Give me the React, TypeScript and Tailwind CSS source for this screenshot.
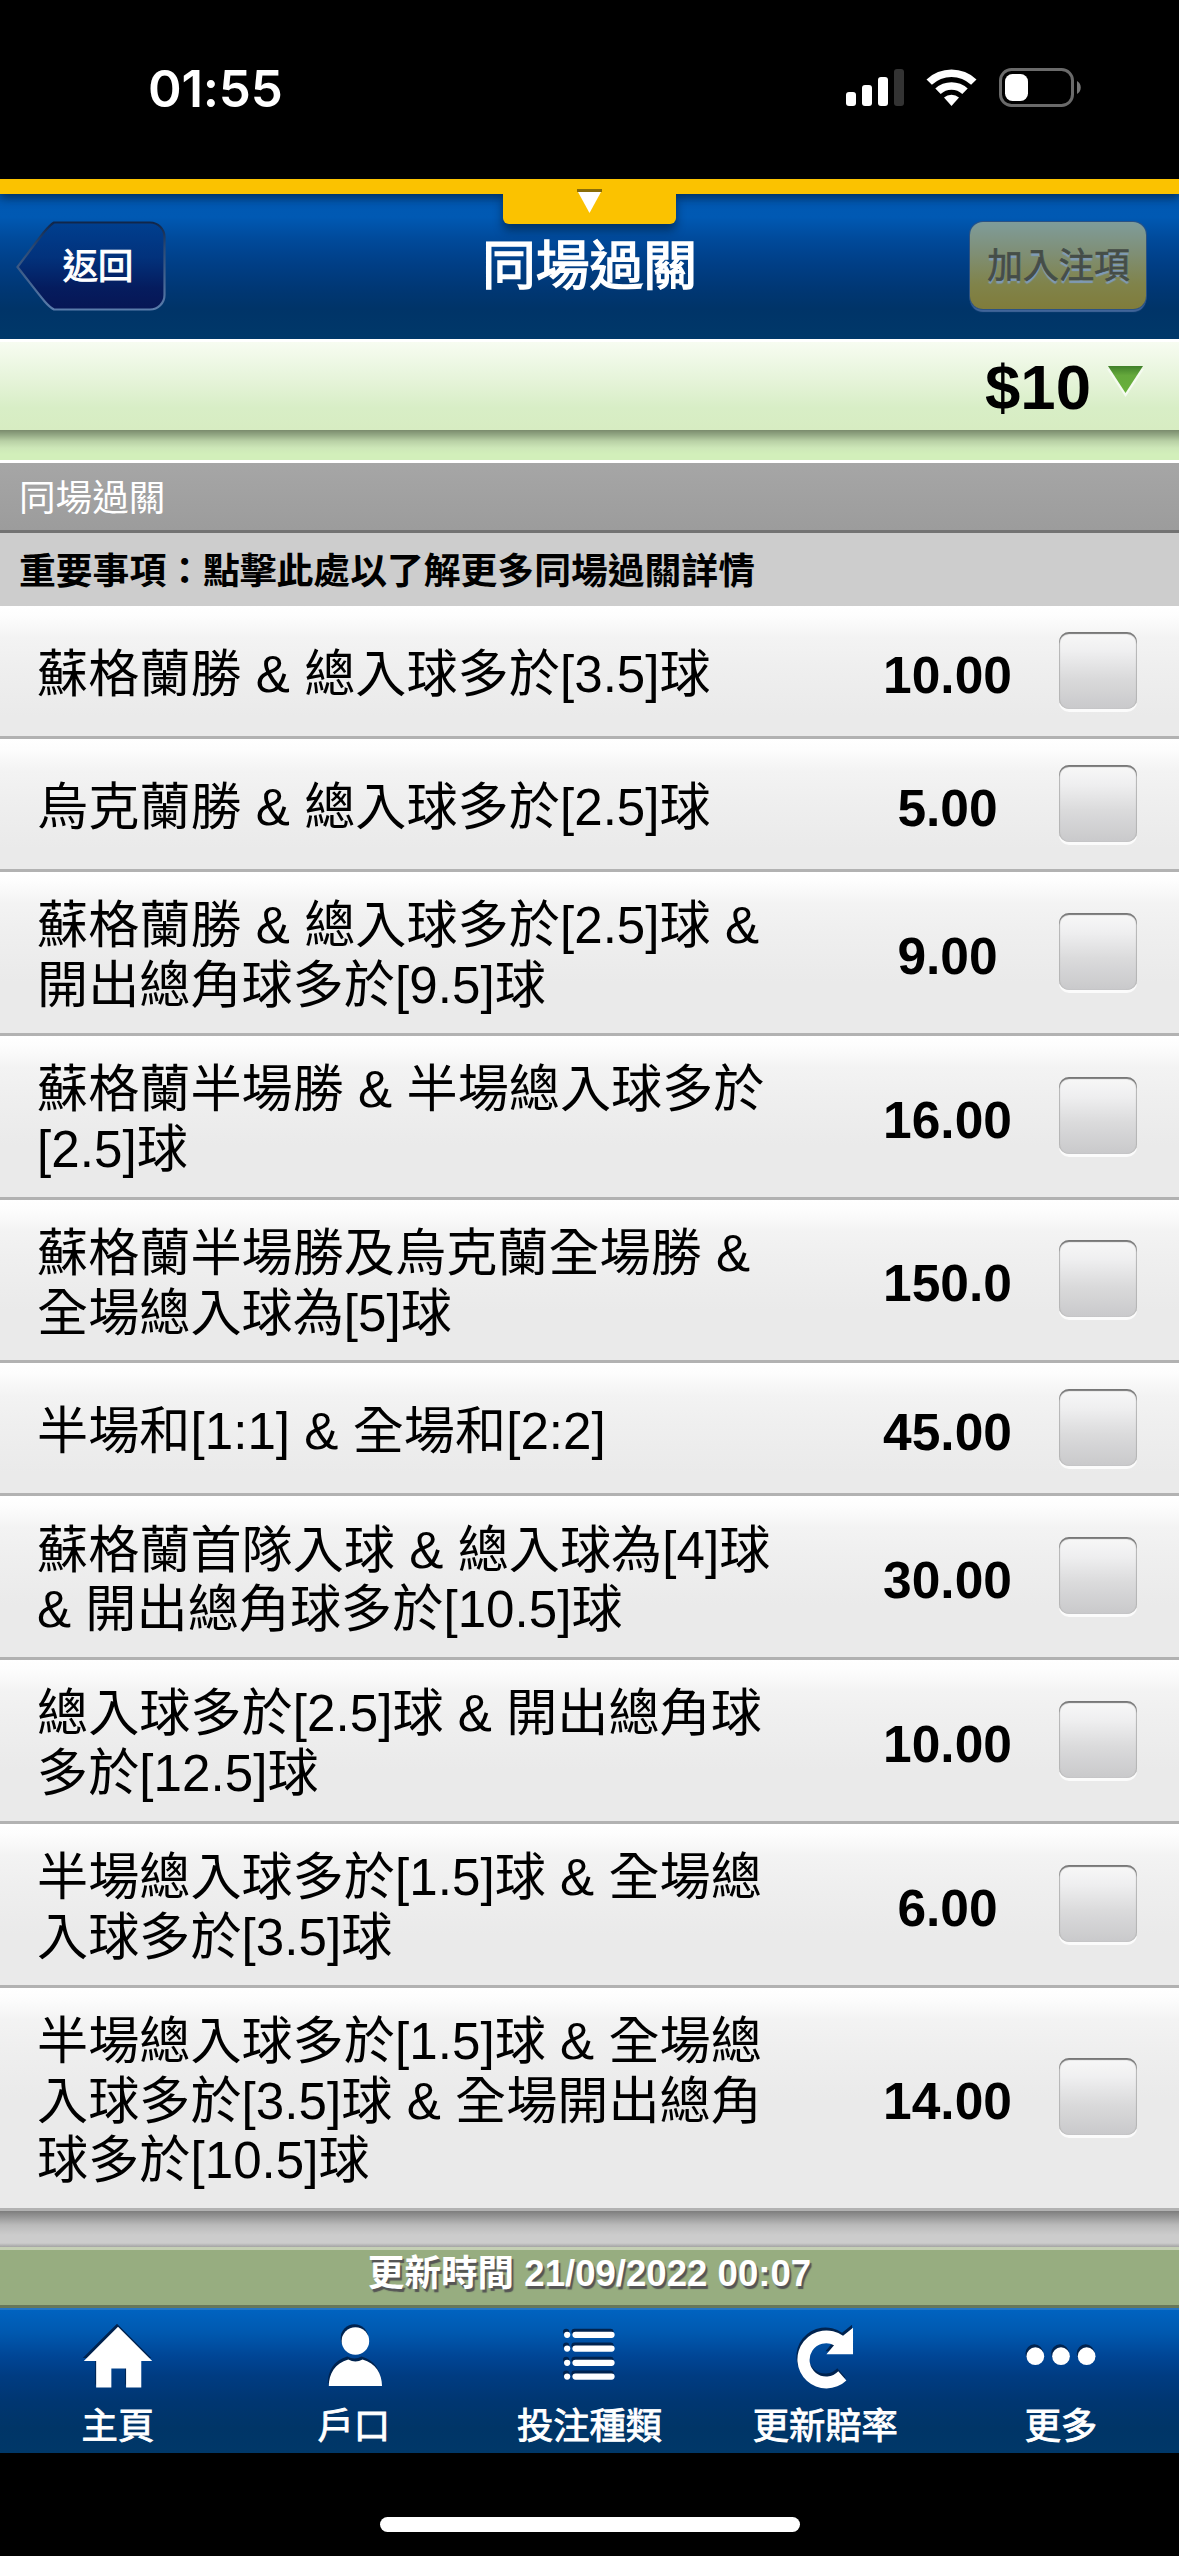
import React from "react";

interface Bet {
  id: number;
  label: string;
  odds: string;
}

interface BetRowProps {
  label: string;
  odds: string;
}

interface TabItemProps {
  label: string;
  children: React.ReactNode;
}

const bets: Bet[] = [
  { id: 1, label: "蘇格蘭勝 & 總入球多於[3.5]球", odds: "10.00" },
  { id: 2, label: "烏克蘭勝 & 總入球多於[2.5]球", odds: "5.00" },
  { id: 3, label: "蘇格蘭勝 & 總入球多於[2.5]球 & 開出總角球多於[9.5]球", odds: "9.00" },
  { id: 4, label: "蘇格蘭半場勝 & 半場總入球多於[2.5]球", odds: "16.00" },
  { id: 5, label: "蘇格蘭半場勝及烏克蘭全場勝 & 全場總入球為[5]球", odds: "150.0" },
  { id: 6, label: "半場和[1:1] & 全場和[2:2]", odds: "45.00" },
  { id: 7, label: "蘇格蘭首隊入球 & 總入球為[4]球 & 開出總角球多於[10.5]球", odds: "30.00" },
  { id: 8, label: "總入球多於[2.5]球 & 開出總角球多於[12.5]球", odds: "10.00" },
  { id: 9, label: "半場總入球多於[1.5]球 & 全場總入球多於[3.5]球", odds: "6.00" },
  { id: 10, label: "半場總入球多於[1.5]球 & 全場總入球多於[3.5]球 & 全場開出總角球多於[10.5]球", odds: "14.00" },
];

const StatusBar: React.FC = () => (
  <div className="flex h-[179px] items-start justify-between bg-black pt-[59px] pl-[148px] pr-[97px] text-white">
    <span className="font-['Inter'] text-[51px] leading-[60px] font-semibold tracking-[-0.2px]">
      01:55
    </span>
    <svg className="mt-[7px] h-[44px] w-[236px]" viewBox="846 66 236 44">
      <rect x="846" y="92" width="10" height="14" rx="3" fill="#fff" />
      <rect x="862" y="85" width="10" height="21" rx="3" fill="#fff" />
      <rect x="878" y="77" width="10" height="29" rx="3" fill="#fff" />
      <rect x="894" y="69" width="10" height="37" rx="3" fill="#333" />
      <path d="M926.5 79.5a36.2 36.2 0 0 1 50 0l-5.4 5.2a28.5 28.5 0 0 0-39.2 0z" fill="#fff" />
      <path d="M935.3 88.6a23.6 23.6 0 0 1 32.4 0l-5.4 5.3a15.9 15.9 0 0 0-21.6 0z" fill="#fff" />
      <path d="M944 97.6a11 11 0 0 1 15 0l-7.5 8.4z" fill="#fff" />
      <rect x="1000.5" y="69.5" width="72" height="36" rx="11" fill="none" stroke="#6a6a6a" strokeWidth="3" />
      <rect x="1005" y="74" width="23" height="27" rx="7.5" fill="#fff" />
      <path d="M1077 81c5 2.6 5 10.4 0 13z" fill="#777" />
    </svg>
  </div>
);

const Header: React.FC = () => (
  <header className="relative flex h-[160px] items-start justify-between bg-[linear-gradient(180deg,#0057b0_0px,#0059b3_38px,#004a9b_60px,#003f87_84px,#003774_110px,#003468_130px,#003869_160px)] pr-[33px] pl-[16px]">
    <div className="absolute inset-x-0 top-0 h-[15px] bg-[#fbc200] shadow-[0_4px_10px_rgba(0,20,40,0.6)]" />
    <div className="absolute top-[14px] left-[503px] h-[31px] w-[173px] rounded-b-[6px] bg-[#fbc200] shadow-[0_6px_10px_rgba(0,20,40,0.55)] [clip-path:inset(1px_-20px_-20px_-20px)]" />
    <svg className="absolute top-[10px] left-[576px] h-[26px] w-[27px]" viewBox="0 0 27 26">
      <path d="M1 0h25v3H1z" fill="#8a6d08" />
      <path d="M2 3h23L13.5 24z" fill="#fff" />
    </svg>

    <button className="relative mt-[42px] flex h-[92px] w-[150px] items-center justify-center pl-[14px]">
      <svg className="absolute inset-0 h-[92px] w-[150px]" viewBox="0 0 150 92">
        <defs>
          <linearGradient id="backFill" x1="0" y1="0" x2="0" y2="1">
            <stop offset="0" stopColor="#003f8f" />
            <stop offset="0.4" stopColor="#02327c" />
            <stop offset="0.75" stopColor="#051c5e" />
            <stop offset="1" stopColor="#071655" />
          </linearGradient>
          <linearGradient id="backEdge" x1="0" y1="0" x2="0" y2="1">
            <stop offset="0" stopColor="#10264a" />
            <stop offset="0.3" stopColor="#2c4a75" />
            <stop offset="1" stopColor="#5a7cab" />
          </linearGradient>
        </defs>
        <path
          d="M38 1.5H134a14.5 14.5 0 0 1 14.5 14.5V74a14.5 14.5 0 0 1-14.5 14.5H38C31 85 25 76 1.5 46C25 15 31 6 38 1.5z"
          fill="url(#backFill)"
          stroke="url(#backEdge)"
          strokeWidth="2.2"
        />
      </svg>
      <span className="relative text-[35.3px] leading-[50px] text-white [-webkit-text-stroke:1px_#fff]">
        返回
      </span>
    </button>

    <h1 className="absolute top-[54px] left-[389px] w-[401px] text-center text-[53.8px] leading-[66px] text-white [-webkit-text-stroke:1.5px_#fff]">
      同場過關
    </h1>

    <button className="mt-[43px] flex h-[87px] w-[176px] items-center justify-center rounded-[13px] bg-[linear-gradient(180deg,#7f9c9a_0%,#7f8f76_35%,#80834a_72%,#807c3b_100%)] shadow-[0_0_0_1px_#2c5283,0_3px_1px_#41659a]">
      <span className="pt-[1px] pl-[1px] text-[35.6px] leading-[50px] text-[#454d48] [-webkit-text-stroke:0.7px_#454d48] [text-shadow:0_2.5px_1px_#7f9bb8]">
        加入注項
      </span>
    </button>
  </header>
);

const StakeBar: React.FC = () => (
  <div>
    <div className="flex h-[91px] items-start justify-end border-t-[3px] border-white bg-[linear-gradient(180deg,#f7fcf1_0%,#e6f4da_42%,#d8eec6_75%,#d7ecc2_100%)] pr-[35px]">
      <span className="mt-[10px] text-[63.5px] leading-[70px] font-bold text-black">$10</span>
      <svg className="mt-[24px] ml-[16px] h-[32px] w-[37px]" viewBox="0 0 37 32">
        <defs>
          <linearGradient id="stakeArrow" x1="0" y1="0" x2="0" y2="1">
            <stop offset="0" stopColor="#40802a" />
            <stop offset="0.35" stopColor="#65a93c" />
            <stop offset="1" stopColor="#68b23b" />
          </linearGradient>
        </defs>
        <path d="M0 3h37L18.5 31z" fill="#f5fbf0" />
        <path d="M1 0h35L18.5 27z" fill="url(#stakeArrow)" />
      </svg>
    </div>
    <div className="h-[30px] bg-[linear-gradient(180deg,#7a8b6d_0px,#94a985_5px,#b8d0a5_11px,#cde7b8_18px,#d2efba_24px)]" />
  </div>
);

const BetRow: React.FC<BetRowProps> = ({ label, odds }) => (
  <li className="flex min-h-[133px] items-center border-b-[3px] border-[#b2b2b2] bg-[linear-gradient(180deg,#ffffff_0px,#fdfdfd_10px,#f3f3f3_32px,#efefef_60px,#eaeaea_110px)] pl-[37px] last:grow">
    <div className="w-[755px] pt-[24.4px] pb-[17px] text-[51.1px] leading-[59.7px] tracking-[0.05px] text-black">
      {label}
    </div>
    <span className="w-[311px] pt-[7px] text-center text-[51.5px] leading-[60px] font-bold text-black">
      {odds}
    </span>
    <button
      aria-label={label}
      className="-mt-[2px] -ml-[44px] h-[77px] w-[78px] rounded-[10px] bg-[linear-gradient(180deg,#f8f8f8_0%,#efeff0_25%,#dadadb_60%,#c9c9cb_100%)] shadow-[0_3px_0_#fbfbfb,inset_0_2px_1px_#777777,inset_1px_0_1px_#bbbbbb,inset_-1px_0_1px_#bbbbbb]"
    />
  </li>
);

const TabItem: React.FC<TabItemProps> = ({ label, children }) => (
  <li className="flex flex-1 flex-col items-center pt-[11px]">
    <svg className="h-[80px] w-[80px] drop-shadow-[-1px_-3px_0px_#00234f]" viewBox="0 0 80 80" fill="#fff">
      {children}
    </svg>
    <span className="mt-[4px] text-[36.3px] leading-[52px] text-white [-webkit-text-stroke:0.9px_#fff]">
      {label}
    </span>
  </li>
);

const TabBar: React.FC = () => (
  <ul className="flex h-[145px] border-t-2 border-[#2475c5] bg-[linear-gradient(180deg,#0063c0_0px,#0059b0_22px,#004696_46px,#003c82_66px,#003671_92px,#003567_118px,#003869_145px)]">
    <TabItem label="主頁">
      <path d="M40 6L76 42H64.5V70H48.5V50H33V70H17V42H4z" />
    </TabItem>
    <TabItem label="戶口">
      <circle cx="41.5" cy="21" r="14.5" />
      <path d="M34 40.5q7.5 4.5 15 0C63 44.5 69.5 55.5 69.5 68.5H13.5C13.5 55.5 20 44.5 34 40.5z" />
    </TabItem>
    <TabItem label="投注種類">
      {[14.5, 29, 44, 58.5].map((y) => (
        <g key={y}>
          <circle cx="17" cy={y} r="3.3" />
          <rect x="22.5" y={y - 3.3} width="44.5" height="6.6" rx="3.3" />
        </g>
      ))}
    </TabItem>
    <TabItem label="更新賠率">
      <path d="M59 15.5L69.5 7V35H41.5L49.5 25.5A17.5 17.5 0 1 0 54 53L62.5 62.5A30.5 30.5 0 1 1 59 15.5z" />
    </TabItem>
    <TabItem label="更多">
      <circle cx="13" cy="37" r="9.3" />
      <circle cx="40" cy="37" r="9.3" />
      <circle cx="67" cy="37" r="9.3" />
    </TabItem>
  </ul>
);

const App: React.FC = () => {
  return (
    <div className="h-[2556px] w-[1179px] overflow-hidden bg-black font-['Liberation_Sans','Noto_Sans_CJK_TC',sans-serif]">
      <StatusBar />
      <Header />
      <StakeBar />

      <div className="flex h-[73px] items-center border-t-[3px] border-b-[3px] border-t-white border-b-[#737373] bg-[linear-gradient(180deg,#a6a6a6,#9c9c9c)] pt-[4px] pl-[19px] text-[36.6px] leading-[50px] text-white">
        同場過關
      </div>
      <div className="flex h-[73px] items-center bg-[#cdcdcd] pt-[4px] pl-[19px] text-[36.8px] leading-[50px] font-bold text-black">
        重要事項：點擊此處以了解更多同場過關詳情
      </div>

      <ul className="flex h-[1605px] flex-col">
        {bets.map((bet) => (
          <BetRow key={bet.id} label={bet.label} odds={bet.odds} />
        ))}
      </ul>

      <div className="h-[36px] bg-[linear-gradient(180deg,#7d7d7d_0px,#979797_6px,#bababa_14px,#cccccc_24px,#cccccc_32px,#a3a3a3_36px)]" />
      <div className="flex h-[61px] items-start justify-center border-t-[3px] border-b-[3px] border-t-[#c4cfb4] border-b-[#67775a] bg-[#97ad80] text-[36.6px] leading-[48px] font-bold text-white [text-shadow:2px_3px_1px_#555555]">
        更新時間 21/09/2022 00:07
      </div>

      <TabBar />
      <div className="flex h-[103px] justify-center pt-[64px]">
        <div className="h-[15px] w-[420px] rounded-full bg-white" />
      </div>
    </div>
  );
};

export default App;
